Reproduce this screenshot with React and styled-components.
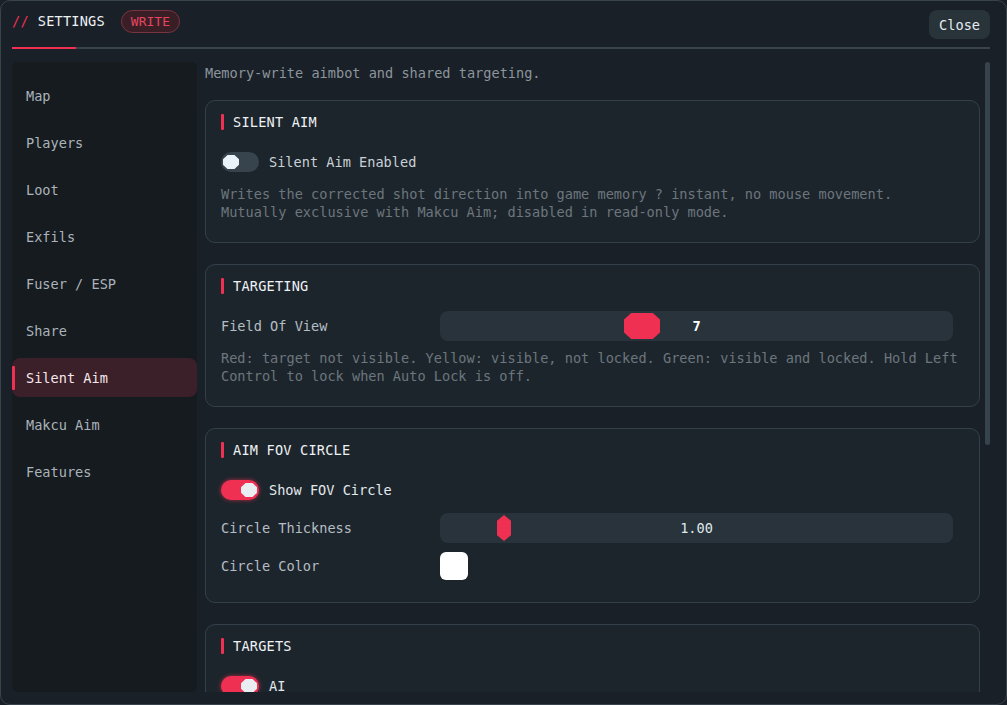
import React from 'react'
import styled, { createGlobalStyle, css } from 'styled-components'

const mono = `"DejaVu Sans Mono", "Liberation Mono", monospace`

const colors = {
    bg: '#1a2027',
    sidebar: '#161b20',
    card: '#1d252c',
    cardBorder: '#33404a',
    line: '#39434b',
    track: '#28333b',
    accent: '#ef3053',
    text: '#c9d1d6',
    heading: '#edf2f5',
    muted: '#8b959c',
    faint: '#6c767d',
}

const GlobalStyles = createGlobalStyle`
    * {
        box-sizing: border-box;
    }
    html, body {
        margin: 0;
        padding: 0;
        background: ${colors.bg};
        overflow: hidden;
        font-family: ${mono};
        font-size: 13.6px;
    }
`

const Frame = styled.div`
    width: 1007px;
    height: 705px;
    display: flex;
    flex-direction: column;
    background: ${colors.bg};
    border: 1px solid ${colors.line};
    border-radius: 10px;
    padding: 0 16px 12px 11px;
`

const Header = styled.header`
    height: 46px;
    display: flex;
    align-items: flex-start;
    padding-top: 9px;
    gap: 16px;
`

const Title = styled.div`
    margin-top: 2px;
    line-height: 18px;
    color: ${colors.heading};
    letter-spacing: 0.2px;
    span {
        color: ${colors.accent};
        margin-right: 9px;
    }
`

const Badge = styled.div`
    height: 23px;
    padding: 0 9px;
    display: flex;
    align-items: center;
    border-radius: 12px;
    border: 1px solid #7a3441;
    background: #3a1e26;
    color: #e4465f;
    font-size: 13px;
`

const CloseButton = styled.button`
    margin-left: auto;
    height: 29px;
    padding: 0 10px;
    border: none;
    border-radius: 8px;
    background: #28333a;
    color: #e6ecef;
    font-family: ${mono};
    font-size: 13.6px;
`

const TabLine = styled.div`
    height: 2px;
    background: ${colors.line};
    position: relative;
    &::before {
        content: '';
        position: absolute;
        left: 0;
        top: 0;
        width: 64px;
        height: 2px;
        background: ${colors.accent};
    }
`

const Body = styled.div`
    flex: 1;
    min-height: 0;
    margin-top: 13px;
    display: flex;
    gap: 8px;
`

const Sidebar = styled.nav`
    width: 185px;
    flex-shrink: 0;
    background: ${colors.sidebar};
    border-radius: 6px;
    padding-top: 14px;
    display: flex;
    flex-direction: column;
    gap: 8px;
`

const NavItem = styled.div`
    position: relative;
    height: 39px;
    display: flex;
    align-items: center;
    padding-left: 14px;
    border-radius: 8px;
    color: #aab3ba;
    ${props => props.active && css`
        background: #3b1f29;
        color: #f4e8ec;
        &::before {
            content: '';
            position: absolute;
            left: 0;
            top: 8px;
            width: 3px;
            height: 24px;
            background: ${colors.accent};
            border-radius: 1px;
        }
    `}
`

const ContentPane = styled.div`
    flex: 1;
    min-width: 0;
    display: flex;
    gap: 5px;
`

const Content = styled.main`
    flex: 1;
    min-width: 0;
    overflow: hidden;
    padding-top: 2px;
    display: flex;
    flex-direction: column;
    gap: 21px;
`

const ScrollRail = styled.div`
    width: 5px;
    flex-shrink: 0;
`

const ScrollThumb = styled.div`
    height: 383px;
    border-radius: 3px;
    background: #37434c;
`

const Description = styled.p`
    margin: 0 0 -3px;
    line-height: 18px;
    color: ${colors.muted};
`

const Card = styled.section`
    flex-shrink: 0;
    background: ${colors.card};
    border: 1px solid ${colors.cardBorder};
    border-radius: 10px;
    padding: 13px 15px 21px;
    display: flex;
    flex-direction: column;
    gap: 8px;
`

const CardTitle = styled.h3`
    margin: 0 0 9px;
    height: 16px;
    display: flex;
    align-items: center;
    gap: 9px;
    font-size: 13.6px;
    font-weight: normal;
    line-height: 16px;
    color: ${colors.heading};
    letter-spacing: 0.2px;
    &::before {
        content: '';
        width: 3px;
        height: 16px;
        background: ${colors.accent};
        border-radius: 1px;
    }
`

const Row = styled.div`
    height: 30px;
    display: grid;
    grid-template-columns: 219px 1fr;
    align-items: center;
`

const Label = styled.span`
    color: #b5bdc3;
`

const ToggleRow = styled.label`
    height: 30px;
    display: flex;
    align-items: center;
    gap: 10px;
    color: ${props => props.on ? '#e3e9ed' : colors.text};
`

const octagon = 'polygon(28% 0, 72% 0, 100% 30%, 100% 70%, 72% 100%, 28% 100%, 0 70%, 0 30%)'

const Switch = styled.span`
    position: relative;
    width: 38px;
    height: 20px;
    border-radius: 10px;
    background: ${props => props.on ? colors.accent : '#37434d'};
    box-shadow: ${props => props.on ? '0 0 4px rgba(239, 48, 83, 0.7)' : 'none'};
    &::after {
        content: '';
        position: absolute;
        top: 3px;
        left: ${props => props.on ? '20px' : '2px'};
        width: 16px;
        height: 14px;
        background: ${props => props.on ? '#e9eef2' : '#eaf3fa'};
        clip-path: ${octagon};
    }
`

const Track = styled.div`
    position: relative;
    height: 30px;
    margin-right: 11px;
    border-radius: 8px;
    background: ${colors.track};
    display: flex;
    align-items: center;
    justify-content: center;
    color: ${props => props.bright ? '#ffffff' : '#dfe6ea'};
    font-weight: ${props => props.bright ? 'bold' : 'normal'};
`

const Thumb = styled.span`
    position: absolute;
    top: 2px;
    height: 26px;
    background: ${colors.accent};
    clip-path: ${props => props.narrow
        ? 'polygon(50% 0, 100% 22%, 100% 78%, 50% 100%, 0 78%, 0 22%)'
        : 'polygon(20% 0, 80% 0, 100% 25%, 100% 75%, 80% 100%, 20% 100%, 0 75%, 0 25%)'};
`

const Swatch = styled.span`
    width: 28px;
    height: 28px;
    border-radius: 6px;
    background: ${props => props.color};
`

const Help = styled.p`
    margin: 0;
    line-height: 18px;
    color: ${colors.faint};
`

const navItems = ['Map', 'Players', 'Loot', 'Exfils', 'Fuser / ESP', 'Share', 'Silent Aim', 'Makcu Aim', 'Features']

const Toggle = ({ on, children }) => (
    <ToggleRow on={on}>
        <Switch on={on} />
        {children}
    </ToggleRow>
)

const Slider = ({ left, width, narrow, bright, value }) => (
    <Track bright={bright}>
        <Thumb narrow={narrow} style={{ left, width }} />
        {value}
    </Track>
)

export default function App() {
    return (
        <>
            <GlobalStyles />
            <Frame>
                <Header>
                    <Title><span>//</span>SETTINGS</Title>
                    <Badge>WRITE</Badge>
                    <CloseButton>Close</CloseButton>
                </Header>
                <TabLine />
                <Body>
                    <Sidebar>
                        {navItems.map(item => (
                            <NavItem key={item} active={item === 'Silent Aim'}>{item}</NavItem>
                        ))}
                    </Sidebar>
                    <ContentPane>
                        <Content>
                            <Description>Memory-write aimbot and shared targeting.</Description>

                            <Card>
                                <CardTitle>SILENT AIM</CardTitle>
                                <Toggle>Silent Aim Enabled</Toggle>
                                <Help>
                                    Writes the corrected shot direction into game memory ? instant, no mouse movement.<br />
                                    Mutually exclusive with Makcu Aim; disabled in read-only mode.
                                </Help>
                            </Card>

                            <Card>
                                <CardTitle>TARGETING</CardTitle>
                                <Row>
                                    <Label>Field Of View</Label>
                                    <Slider left={184} width={36} bright value="7" />
                                </Row>
                                <Help>
                                    Red: target not visible. Yellow: visible, not locked. Green: visible and locked. Hold Left Control to lock when Auto Lock is off.
                                </Help>
                            </Card>

                            <Card>
                                <CardTitle>AIM FOV CIRCLE</CardTitle>
                                <Toggle on>Show FOV Circle</Toggle>
                                <Row>
                                    <Label>Circle Thickness</Label>
                                    <Slider left={57} width={14} narrow value="1.00" />
                                </Row>
                                <Row>
                                    <Label>Circle Color</Label>
                                    <Swatch color="#ffffff" />
                                </Row>
                            </Card>

                            <Card>
                                <CardTitle>TARGETS</CardTitle>
                                <Toggle on>AI</Toggle>
                                <Toggle on>PMC</Toggle>
                                <Toggle on>Player Scav</Toggle>
                            </Card>
                        </Content>
                        <ScrollRail>
                            <ScrollThumb />
                        </ScrollRail>
                    </ContentPane>
                </Body>
            </Frame>
        </>
    )
}
